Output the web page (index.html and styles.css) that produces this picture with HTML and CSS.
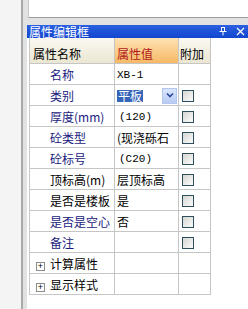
FILE: index.html
```html
<!DOCTYPE html>
<html lang="zh-CN">
<head>
    <meta charset="UTF-8">
    <title>属性编辑框</title>
    <link rel="stylesheet" href="styles.css">
</head>
<body>
    <div class="app">
        <div class="gutter"></div>
        <div class="dock">
            <div class="top-pane"></div>

            <div class="titlebar">
                <span class="title">属性编辑框</span>
                <span class="title-icons">
                    <!-- pin -->
                    <svg width="8" height="9" viewBox="0 0 8 9">
                        <path d="M2 0.5h4M2.5 0.5v4M5.5 0.5v4M0.5 4.5h7M4 4.5v4" stroke="#fff" stroke-width="1" fill="none"/>
                    </svg>
                    <!-- close -->
                    <svg width="9" height="9" viewBox="0 0 9 9">
                        <path d="M1 1l7 7M8 1l-7 7" stroke="#fff" stroke-width="1.2" fill="none"/>
                    </svg>
                </span>
            </div>

            <div class="panel">
                <table class="props">
                    <tr class="head">
                        <th class="c-name">属性名称</th>
                        <th class="c-value">属性值</th>
                        <th class="c-extra">附加</th>
                    </tr>
                    <tr>
                        <td class="name blue">名称</td>
                        <td class="value mono">XB-1</td>
                        <td class="extra"></td>
                    </tr>
                    <tr>
                        <td class="name blue">类别</td>
                        <td class="value">
                            <div class="combo">
                                <span class="selected">平板</span>
                                <span class="drop">
                                    <svg width="8" height="5" viewBox="0 0 8 5">
                                        <path d="M1 0.5l3 3 3-3" stroke="#2a4a9a" stroke-width="1.6" fill="none"/>
                                    </svg>
                                </span>
                            </div>
                        </td>
                        <td class="extra"><span class="check"></span></td>
                    </tr>
                    <tr>
                        <td class="name blue">厚度(mm)</td>
                        <td class="value mono pad">(120)</td>
                        <td class="extra"><span class="check"></span></td>
                    </tr>
                    <tr>
                        <td class="name blue">砼类型</td>
                        <td class="value">(现浇砾石</td>
                        <td class="extra"><span class="check"></span></td>
                    </tr>
                    <tr>
                        <td class="name blue">砼标号</td>
                        <td class="value mono pad">(C20)</td>
                        <td class="extra"><span class="check"></span></td>
                    </tr>
                    <tr>
                        <td class="name">顶标高(m)</td>
                        <td class="value">层顶标高</td>
                        <td class="extra"><span class="check"></span></td>
                    </tr>
                    <tr>
                        <td class="name">是否是楼板</td>
                        <td class="value">是</td>
                        <td class="extra"><span class="check"></span></td>
                    </tr>
                    <tr>
                        <td class="name blue">是否是空心</td>
                        <td class="value">否</td>
                        <td class="extra"><span class="check"></span></td>
                    </tr>
                    <tr>
                        <td class="name blue">备注</td>
                        <td class="value"></td>
                        <td class="extra"><span class="check"></span></td>
                    </tr>
                    <tr class="group">
                        <td class="name"><span class="plus">+</span>计算属性</td>
                        <td class="value"></td>
                        <td class="extra"></td>
                    </tr>
                    <tr class="group">
                        <td class="name"><span class="plus">+</span>显示样式</td>
                        <td class="value"></td>
                        <td class="extra"></td>
                    </tr>
                </table>
            </div>
        </div>
    </div>
</body>
</html>
```

FILE: styles.css
```css
* {
    box-sizing: border-box;
}

html, body {
    margin: 0;
    padding: 0;
    height: 100%;
}

body {
    font-family: "Noto Sans CJK SC", "Liberation Sans", sans-serif;
    font-size: 12px;
    color: #000;
    background: #f3f3f3;
}

.app {
    display: flex;
    height: 100%;
}

.gutter {
    width: 21px;
    background: #f4f4f4;
}

.dock {
    flex: 1;
    display: flex;
    flex-direction: column;
    border-left: 2px solid #a9a9a9;
    background: #e2e2e2;
    padding-left: 4px;
}

.top-pane {
    height: 18px;
    margin-left: 1px;
    background: #fff;
    border-bottom: 1px solid #9c9c9c;
    border-left: 1px solid #c8c8c8;
}

.titlebar {
    margin-top: 7px;
    height: 13px;
    display: flex;
    align-items: center;
    justify-content: space-between;
    background: linear-gradient(#2b60e0, #1246cf);
    color: #fff;
    padding: 0 3px 0 2px;
}

.title {
    font-size: 12px;
    line-height: 13px;
}

.title-icons {
    display: flex;
    align-items: center;
    gap: 9px;
}

.title-icons svg {
    display: block;
}

.panel {
    flex: 1;
    background: #fff;
    padding-left: 2px;
}

/* property grid */
.props {
    border-collapse: collapse;
    table-layout: fixed;
    width: 181px;
}

.props th,
.props td {
    border: 1px solid #c6c6c6;
    padding: 0;
    white-space: nowrap;
    overflow: hidden;
    font-weight: normal;
    text-align: left;
}

.props tr {
    height: 21px;
}

.props tr.head {
    height: 25px;
}

.props th {
    padding-top: 6px;
    background: linear-gradient(#faf8f1, #ebe6d2);
    border-top: none;
}

.c-name {
    width: 85px;
    padding-left: 3px !important;
}

.c-value {
    width: 64px;
    padding-left: 2px !important;
    color: #b01818;
    background: linear-gradient(#fde2b4, #f6b865) !important;
}

.c-extra {
    width: 32px;
    padding-left: 1px !important;
}

.name {
    padding-left: 20px !important;
    padding-top: 2px !important;
}

.blue {
    color: #1a1a80;
}

.value {
    padding-left: 2px !important;
    padding-top: 2px !important;
}

.mono {
    font-family: "Liberation Mono", "Noto Sans CJK SC", monospace;
    font-size: 11px;
}

.pad {
    padding-left: 4px !important;
}

.extra {
    padding-left: 3px !important;
    vertical-align: middle;
}

.check {
    display: block;
    width: 12px;
    height: 12px;
    margin-top: 2px;
    border: 1px solid #2e4f5e;
    background: linear-gradient(135deg, #d6d6d2, #fbfbfb);
}

.combo {
    display: flex;
    align-items: center;
    justify-content: space-between;
    padding-right: 1px;
}

.selected {
    background: #3565b8;
    color: #fff;
    line-height: 12px;
    padding: 0 1px;
}

.drop {
    width: 15px;
    height: 16px;
    display: flex;
    align-items: center;
    justify-content: center;
    background: linear-gradient(#dbe6fd, #b8cbf4);
    border: 1px solid #b5c6ee;
}

.group .name {
    padding-left: 6px !important;
}

.plus {
    display: inline-block;
    width: 9px;
    height: 9px;
    margin-right: 5px;
    border: 1px solid #8c8c8c;
    font-family: "Liberation Sans", sans-serif;
    font-size: 9px;
    line-height: 7px;
    text-align: center;
    vertical-align: 0;
}
```
